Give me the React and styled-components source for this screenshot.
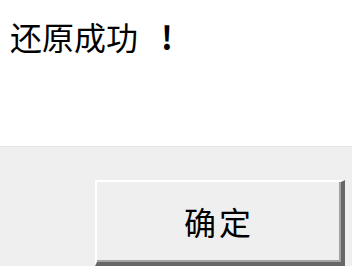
import React from "react";
import styled, { createGlobalStyle } from "styled-components";

const Global = createGlobalStyle`
html, body {
margin:0;
padding:0;
background:#ffffff;
}
`;

const Dialog = styled.div`
width:352px;
height:266px;
display:flex;
flex-direction:column;
overflow:hidden;
font-family:"Noto Sans CJK SC", "Noto Sans", sans-serif;
color:#000000;
`;

const Body = styled.div`
height:147px;
background:#ffffff;
padding:20px 0 0 10px;
box-sizing:border-box;
`;

const Message = styled.p`
margin:0;
font-size:32px;
line-height:32px;
font-weight:400;
`;

const Bang = styled.span`
display:inline-block;
margin-left:23px;
font-weight:700;
`;

const Footer = styled.div`
flex:1;
background:#efefef;
border-top:1px solid #e6e6e6;
display:flex;
align-items:flex-start;
padding:33px 0 0 95px;
`;

const Button = styled.button`
width:250px;
height:86px;
box-sizing:border-box;
background:#efefef;
border-top:2px solid #ffffff;
border-left:2px solid #ffffff;
border-right:4px solid #676767;
border-bottom:4px solid #676767;
box-shadow:inset -2px -2px 0 #a3a3a3;
padding:0 0 2px 0;
font-family:inherit;
font-size:32px;
line-height:32px;
font-weight:400;
letter-spacing:3px;
color:#000000;
`;

export default function App() {
    return (
        <>
            <Global />
            <Dialog>
                <Body>
                    <Message>还原成功<Bang>!</Bang></Message>
                </Body>
                <Footer>
                    <Button>确定</Button>
                </Footer>
            </Dialog>
        </>
    );
}
